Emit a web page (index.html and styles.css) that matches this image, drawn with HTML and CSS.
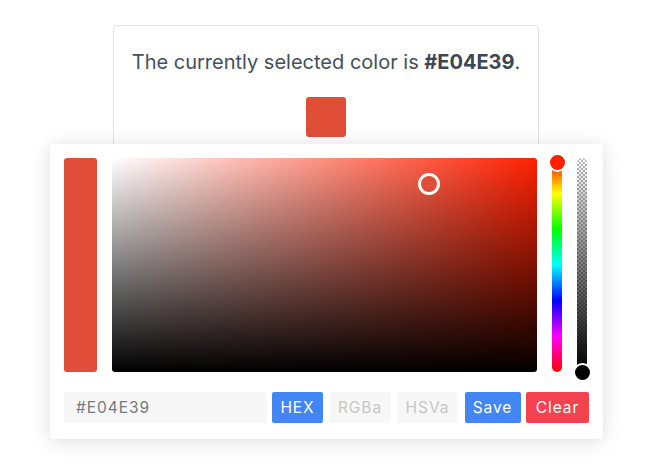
FILE: index.html
```html
<!DOCTYPE html>
<html lang="en">
<head>
<meta charset="utf-8">
<title>Color picker</title>
<link rel="stylesheet" href="styles.css">
</head>
<body>
<div class="page">
  <div class="card">
    <p class="msg">The currently selected color is <strong>#E04E39</strong>.</p>
    <div class="swatch"></div>
  </div>

  <div class="pcr-app">
    <div class="selection">
      <div class="preview"></div>
      <div class="palette">
        <div class="palette-picker"></div>
      </div>
      <div class="slider hue">
        <div class="knob knob-hue"></div>
      </div>
      <div class="slider opacity">
        <div class="knob knob-opacity"></div>
      </div>
    </div>
    <div class="interaction">
      <input class="result" type="text" value="#E04E39" spellcheck="false">
      <button class="type type-hex active">HEX</button>
      <button class="type type-rgba">RGBa</button>
      <button class="type type-hsva">HSVa</button>
      <button class="action save">Save</button>
      <button class="action clear">Clear</button>
    </div>
  </div>
</div>
</body>
</html>
```

FILE: styles.css
```css
* {
  box-sizing: border-box;
}

html, body {
  margin: 0;
  padding: 0;
  background: #ffffff;
}

body {
  font-family: Inter, "Noto Sans", "Liberation Sans", sans-serif;
  width: 650px;
  height: 475px;
  overflow: hidden;
}

.page {
  position: relative;
  display: flex;
  flex-direction: column;
  align-items: center;
  padding: 25px 0 0 2px;
  height: 475px;
}

.card {
  width: 426px;
  border: 1px solid #dfe3e8;
  border-radius: 4px;
  background: #fff;
  padding: 22px 0 30px;
  display: flex;
  flex-direction: column;
  align-items: center;
}

.msg {
  margin: 0;
  font-size: 20px;
  line-height: 28px;
  color: #454f5a;
}

.msg strong {
  font-weight: 700;
  color: #3d4752;
}

.swatch {
  width: 40px;
  height: 40px;
  margin-top: 21px;
  border-radius: 3px;
  background: #e04e39;
}

/* picker popover */
.pcr-app {
  position: absolute;
  left: 50px;
  top: 144px;
  width: 553px;
  padding: 14px 14px 16px;
  background: #fff;
  border-radius: 2px;
  box-shadow: 0 3px 24px 0 rgba(0, 0, 0, 0.1), 0 0 14px 0 rgba(0, 0, 0, 0.04);
  display: flex;
  flex-direction: column;
  gap: 20px;
}

.selection {
  display: flex;
  height: 214px;
  gap: 15px;
}

.preview {
  width: 33px;
  border-radius: 3px;
  background: #e04e39;
}

.palette {
  position: relative;
  flex: 1;
  border-radius: 3px;
  background:
    linear-gradient(to top, #000, rgba(0, 0, 0, 0)),
    linear-gradient(to left, hsl(7.5, 100%, 50%), #fff);
}

.palette-picker {
  position: absolute;
  left: 74.6%;
  top: 12.2%;
  width: 22px;
  height: 22px;
  margin: -11px 0 0 -11px;
  border: 3px solid #fff;
  border-radius: 50%;
  background: #e04e39;
}

.slider {
  position: relative;
  width: 10px;
  border-radius: 5px;
}

.hue {
  background: linear-gradient(to bottom,
    #f00 0%, #ff0 16.66%, #0f0 33.33%, #0ff 50%, #00f 66.66%, #f0f 83.33%, #f00 100%);
}

.opacity {
  margin-right: 2px;
  background:
    linear-gradient(to bottom, rgba(0, 0, 0, 0), #000),
    repeating-conic-gradient(#b9b9b9 0 25%, #ffffff 0 50%) 0 0 / 4px 4px;
}

.knob {
  position: absolute;
  left: 50%;
  width: 19px;
  height: 19px;
  margin-left: -9.5px;
  margin-top: -9.5px;
  border: 2px solid #fff;
  border-radius: 50%;
}

.knob-hue {
  top: 2.2%;
  background: hsl(7.5, 100%, 50%);
}

.knob-opacity {
  top: 100%;
  background: #000;
}

.interaction {
  display: flex;
  gap: 5.5px;
  height: 31px;
}

.interaction .result,
.interaction .type,
.interaction .action {
  font-family: Inter, "Noto Sans", "Liberation Sans", sans-serif;
  font-size: 15.5px;
  letter-spacing: 0.06em;
  border: none;
  outline: none;
  border-radius: 2px;
  margin: 0;
  padding: 0;
  height: 31px;
  -webkit-appearance: none;
  appearance: none;
}

.interaction .result {
  flex: 1;
  min-width: 0;
  padding: 0 12px;
  background: #f7f7f7;
  color: #75797e;
  text-align: left;
}

.type {
  background: #f7f7f7;
  color: #c6c6c6;
  text-align: center;
}

.interaction .type-hex {
  width: 51px;
}

.interaction .type-rgba {
  width: 61px;
  margin-left: 1px;
}

.interaction .type-hsva {
  width: 61px;
  margin-left: 1px;
}

.type.active {
  background: #4285f4;
  color: #fff;
}

.action {
  color: #fff;
  text-align: center;
}

.interaction .save {
  width: 56px;
  margin-left: 1px;
  background: #4285f4;
}

.interaction .clear {
  width: 63px;
  background: #f44250;
}
```
